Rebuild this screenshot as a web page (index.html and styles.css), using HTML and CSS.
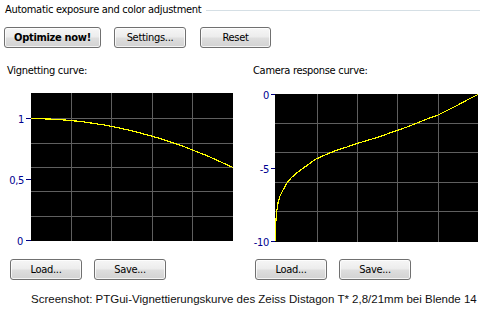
FILE: index.html
```html
<!DOCTYPE html>
<html>
<head>
<meta charset="utf-8">
<link rel="stylesheet" href="styles.css">
</head>
<body>
<div class="page">
  <div class="group-title">
    <span class="group-text">Automatic exposure and color adjustment</span>
    <div class="rule"></div>
  </div>
  <div class="toolbar">
    <button class="btn btn-optimize">Optimize now!</button>
    <button class="btn btn-settings">Settings...</button>
    <button class="btn btn-reset">Reset</button>
  </div>
  <div class="panels">
    <div class="panel panel-left">
      <div class="panel-label">Vignetting curve:</div>
      <svg class="chart" width="240" height="170" viewBox="0 80 240 170">
        <rect x="31" y="93" width="202" height="148" fill="#000"/>
        <g class="grid" stroke="#5f5f5f" stroke-width="1" shape-rendering="crispEdges">
          <line x1="71.5" y1="93" x2="71.5" y2="241"/>
          <line x1="111.5" y1="93" x2="111.5" y2="241"/>
          <line x1="152.5" y1="93" x2="152.5" y2="241"/>
          <line x1="192.5" y1="93" x2="192.5" y2="241"/>
          <line x1="31" y1="118.5" x2="233" y2="118.5"/>
          <line x1="31" y1="143.5" x2="233" y2="143.5"/>
          <line x1="31" y1="167.5" x2="233" y2="167.5"/>
          <line x1="31" y1="191.5" x2="233" y2="191.5"/>
          <line x1="31" y1="216.5" x2="233" y2="216.5"/>
        </g>
        <g class="ticks" stroke="#000080" stroke-width="1" shape-rendering="crispEdges">
          <line x1="26" y1="118.5" x2="31" y2="118.5"/>
          <line x1="26" y1="179.5" x2="31" y2="179.5"/>
          <line x1="26" y1="240.5" x2="31" y2="240.5"/>
        </g>
        <g class="axis-text">
          <text x="24" y="122.5" text-anchor="end">1</text>
          <text x="24" y="183.5" text-anchor="end">0,5</text>
          <text x="23" y="244.5" text-anchor="end">0</text>
        </g>
        <path d="M31 118.5 Q132 118.5 233 167.5" fill="none" stroke="#ffff00" stroke-width="1.2" shape-rendering="crispEdges"/>
      </svg>
      <div class="btnrow">
        <button class="btn btn-small">Load...</button>
        <button class="btn btn-small">Save...</button>
      </div>
    </div>
    <div class="panel panel-right">
      <div class="panel-label">Camera response curve:</div>
      <svg class="chart" width="240" height="170" viewBox="240 80 240 170">
        <rect x="275" y="94" width="203" height="148" fill="#000"/>
        <g class="grid" stroke="#5f5f5f" stroke-width="1" shape-rendering="crispEdges">
          <line x1="317.5" y1="94" x2="317.5" y2="242"/>
          <line x1="357.5" y1="94" x2="357.5" y2="242"/>
          <line x1="397.5" y1="94" x2="397.5" y2="242"/>
          <line x1="438.5" y1="94" x2="438.5" y2="242"/>
          <line x1="275" y1="123.5" x2="478" y2="123.5"/>
          <line x1="275" y1="152.5" x2="478" y2="152.5"/>
          <line x1="275" y1="182.5" x2="478" y2="182.5"/>
          <line x1="275" y1="211.5" x2="478" y2="211.5"/>
        </g>
        <g class="ticks" stroke="#000080" stroke-width="1" shape-rendering="crispEdges">
          <line x1="271" y1="94.5" x2="275" y2="94.5"/>
          <line x1="271" y1="168.5" x2="275" y2="168.5"/>
          <line x1="271" y1="241.5" x2="275" y2="241.5"/>
        </g>
        <g class="axis-text">
          <text x="269" y="98.5" text-anchor="end">0</text>
          <text x="269" y="172.5" text-anchor="end">-5</text>
          <text x="269" y="245.5" text-anchor="end">-10</text>
        </g>
        <polyline points="275.5,241 275.8,222 276.5,213 278,203 280,196 283,190 287,183 291,178 296,173.5 302,169 309,164 315,159.5 325,155 336,150.5 347,147 357,143.5 367,140.5 377,137.5 387,134 397,130.5 407,127 417,123 427,119 438,115 448,110 458,105 468,99.5 478,94.5" fill="none" stroke="#ffff00" stroke-width="1.2" shape-rendering="crispEdges"/>
      </svg>
      <div class="btnrow">
        <button class="btn btn-small">Load...</button>
        <button class="btn btn-small">Save...</button>
      </div>
    </div>
  </div>
  <div class="caption">Screenshot: PTGui-Vignettierungskurve des Zeiss Distagon T* 2,8/21mm bei Blende 14</div>
</div>
</body>
</html>
```

FILE: styles.css
```css
html, body {
  margin: 0;
  padding: 0;
  background: #ffffff;
}

.page {
  width: 480px;
  height: 310px;
  overflow: hidden;
  font-family: "DejaVu Sans Condensed", "DejaVu Sans", sans-serif;
  font-size: 11px;
  letter-spacing: -0.3px;
  color: #000;
}

.group-title {
  display: flex;
  align-items: center;
  height: 20px;
  padding-left: 5px;
}

.group-text {
  line-height: 14px;
  white-space: nowrap;
}

.rule {
  flex: 1;
  height: 1px;
  background: #d5dfe5;
  margin-left: 5px;
}

.toolbar {
  display: flex;
  margin-top: 7px;
  padding-left: 4px;
}

.btn {
  height: 21px;
  margin: 0;
  padding: 0;
  border: 1px solid #707070;
  border-radius: 3px;
  background: linear-gradient(to bottom, #f6f6f6 0%, #ececec 48%, #dedede 52%, #d2d2d2 100%);
  box-shadow: inset 0 0 0 1px rgba(255,255,255,0.75);
  font-family: inherit;
  font-size: 11px;
  letter-spacing: -0.3px;
  color: #000;
  line-height: 19px;
  text-align: center;
}

.btn-optimize {
  width: 97px;
  font-weight: bold;
}

.btn-settings {
  width: 72px;
  margin-left: 13px;
}

.btn-reset {
  width: 71px;
  margin-left: 14px;
}

.panels {
  display: flex;
}

.panel {
  width: 240px;
}

.panel-label {
  height: 16px;
  line-height: 16px;
  margin-top: 15px;
  white-space: nowrap;
}

.panel-left .panel-label {
  padding-left: 7px;
}

.panel-right .panel-label {
  padding-left: 13px;
}

.chart {
  display: block;
  margin-top: 1px;
}

.axis-text text {
  font-family: "DejaVu Sans Condensed", "DejaVu Sans", sans-serif;
  font-size: 11px;
  fill: #000090;
}

.btnrow {
  display: flex;
  margin-top: 9px;
}

.btn-small {
  width: 72px;
}

.panel-left .btnrow {
  padding-left: 10px;
}

.panel-left .btnrow .btn-small + .btn-small {
  margin-left: 12px;
}

.panel-right .btnrow {
  padding-left: 15px;
}

.panel-right .btnrow .btn-small + .btn-small {
  margin-left: 12px;
}

.caption {
  margin-top: 12px;
  padding-left: 31px;
  font-family: "Liberation Sans", Arial, sans-serif;
  font-size: 11.5px;
  letter-spacing: 0;
  line-height: 14px;
  color: #111;
  white-space: nowrap;
}
```
